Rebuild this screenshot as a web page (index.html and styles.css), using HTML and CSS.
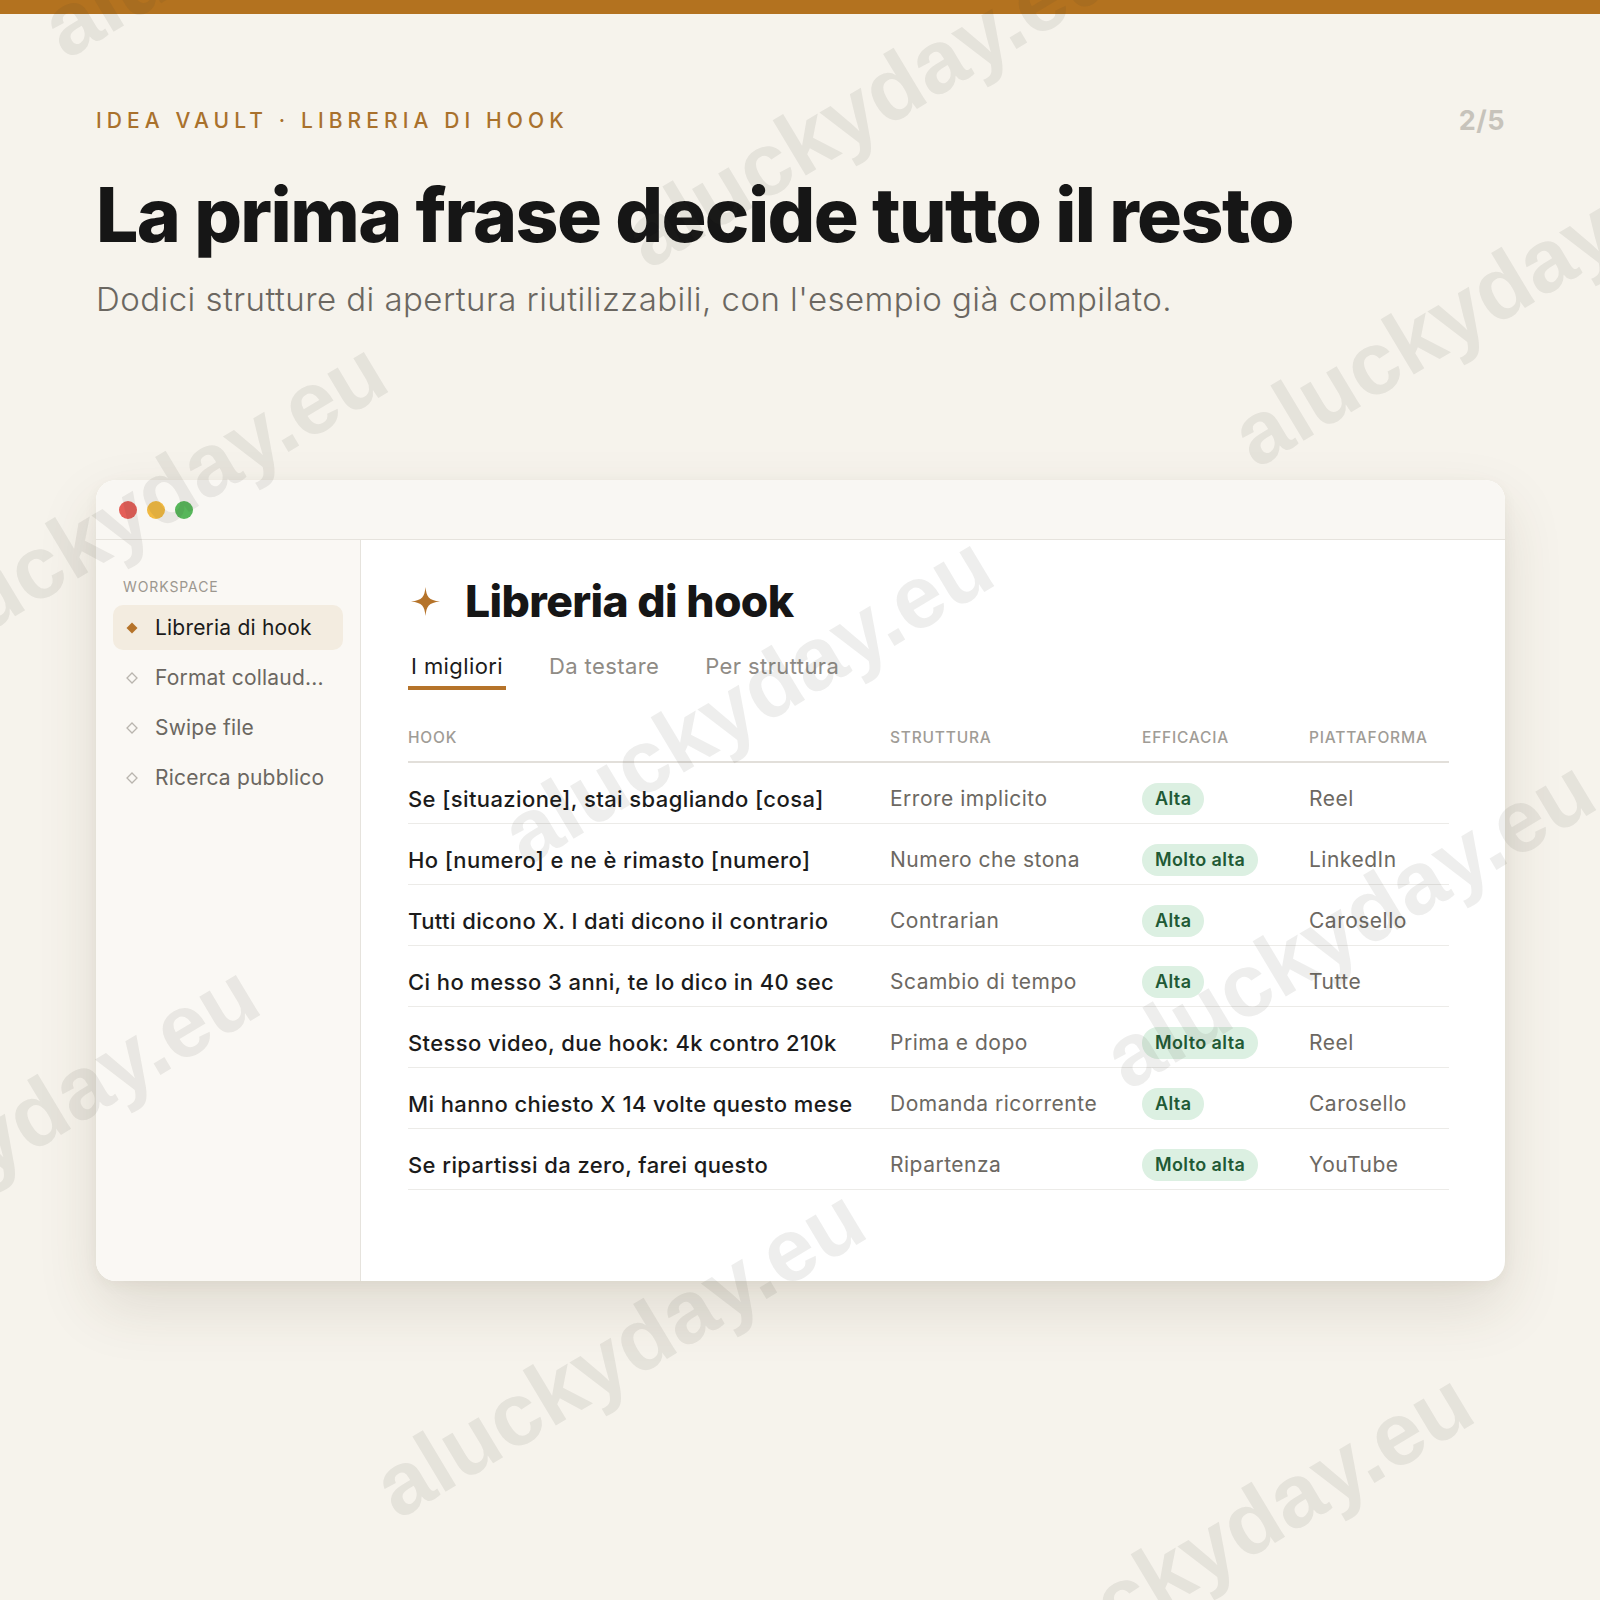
FILE: index.html
```html
<!DOCTYPE html>
<html lang="it">
<head>
<meta charset="utf-8">
<title>Idea Vault · Libreria di hook</title>
<link rel="stylesheet" href="styles.css">
</head>
<body>
<div class="canvas">
  <div class="topbar"></div>
  <div class="page">
    <div class="header-row">
      <div class="eyebrow">IDEA VAULT · LIBRERIA DI HOOK</div>
      <div class="pager">2/5</div>
    </div>
    <h1 class="title">La prima frase decide tutto il resto</h1>
    <p class="subtitle">Dodici strutture di apertura riutilizzabili, con l'esempio già compilato.</p>

    <div class="window">
      <div class="titlebar">
        <span class="dot red"></span>
        <span class="dot yellow"></span>
        <span class="dot green"></span>
      </div>
      <div class="body">
        <aside class="sidebar">
          <div class="side-label">WORKSPACE</div>
          <div class="side-item active">
            <svg class="dia" viewBox="0 0 12 12"><path d="M6 0.5 L11.5 6 L6 11.5 L0.5 6 Z" fill="#b5732a"/></svg>
            <span>Libreria di hook</span>
          </div>
          <div class="side-item">
            <svg class="dia" viewBox="0 0 12 12"><path d="M6 1 L11 6 L6 11 L1 6 Z" fill="none" stroke="#b9b5ae" stroke-width="1.3"/></svg>
            <span>Format collaud...</span>
          </div>
          <div class="side-item">
            <svg class="dia" viewBox="0 0 12 12"><path d="M6 1 L11 6 L6 11 L1 6 Z" fill="none" stroke="#b9b5ae" stroke-width="1.3"/></svg>
            <span>Swipe file</span>
          </div>
          <div class="side-item">
            <svg class="dia" viewBox="0 0 12 12"><path d="M6 1 L11 6 L6 11 L1 6 Z" fill="none" stroke="#b9b5ae" stroke-width="1.3"/></svg>
            <span>Ricerca pubblico</span>
          </div>
        </aside>
        <main class="main">
          <div class="main-head">
            <svg class="star" viewBox="0 0 24 24"><path d="M12 0 C12.8 8 14.5 11 24 12 C14.5 13 12.8 16 12 24 C11.2 16 9.5 13 0 12 C9.5 11 11.2 8 12 0 Z" fill="#b5732a"/></svg>
            <h2 class="main-title">Libreria di hook</h2>
          </div>
          <div class="tabs">
            <div class="tab active">I migliori</div>
            <div class="tab">Da testare</div>
            <div class="tab">Per struttura</div>
          </div>
          <table class="hooks">
            <colgroup>
              <col class="c-hook"><col class="c-str"><col class="c-eff"><col class="c-pl">
            </colgroup>
            <thead>
              <tr><th>HOOK</th><th>STRUTTURA</th><th>EFFICACIA</th><th>PIATTAFORMA</th></tr>
            </thead>
            <tbody>
              <tr><td class="hook">Se [situazione], stai sbagliando [cosa]</td><td class="str">Errore implicito</td><td><span class="badge">Alta</span></td><td class="pl">Reel</td></tr>
              <tr><td class="hook">Ho [numero] e ne è rimasto [numero]</td><td class="str">Numero che stona</td><td><span class="badge">Molto alta</span></td><td class="pl">LinkedIn</td></tr>
              <tr><td class="hook">Tutti dicono X. I dati dicono il contrario</td><td class="str">Contrarian</td><td><span class="badge">Alta</span></td><td class="pl">Carosello</td></tr>
              <tr><td class="hook">Ci ho messo 3 anni, te lo dico in 40 sec</td><td class="str">Scambio di tempo</td><td><span class="badge">Alta</span></td><td class="pl">Tutte</td></tr>
              <tr><td class="hook">Stesso video, due hook: 4k contro 210k</td><td class="str">Prima e dopo</td><td><span class="badge">Molto alta</span></td><td class="pl">Reel</td></tr>
              <tr><td class="hook">Mi hanno chiesto X 14 volte questo mese</td><td class="str">Domanda ricorrente</td><td><span class="badge">Alta</span></td><td class="pl">Carosello</td></tr>
              <tr><td class="hook">Se ripartissi da zero, farei questo</td><td class="str">Ripartenza</td><td><span class="badge">Molto alta</span></td><td class="pl">YouTube</td></tr>
            </tbody>
          </table>
        </main>
      </div>
    </div>
  </div>

  <div class="watermarks">
    <span class="wm wm1">aluckyday.eu</span>
    <span class="wm wm2">aluckyday.eu</span>
    <span class="wm wm3">aluckyday.eu</span>
    <span class="wm wm4">aluckyday.eu</span>
    <span class="wm wm5">aluckyday.eu</span>
    <span class="wm wm6">aluckyday.eu</span>
    <span class="wm wm7">aluckyday.eu</span>
    <span class="wm wm8">aluckyday.eu</span>
    <span class="wm wm9">aluckyday.eu</span>
  </div>
</div>
</body>
</html>
```

FILE: styles.css
```css
* { box-sizing: border-box; }

html, body {
  margin: 0;
  padding: 0;
}

body {
  background: #f6f3ec;
  font-family: Inter, "Noto Sans", "DejaVu Sans", sans-serif;
  color: #1b1b1b;
}

.canvas {
  position: relative;
  width: 1600px;
  height: 1600px;
  overflow: hidden;
  background: #f6f3ec;
}

.topbar {
  height: 14px;
  background: #b3721f;
}

.page {
  padding: 0 95px 0 96px;
}

.header-row {
  display: flex;
  justify-content: space-between;
  align-items: center;
  margin-top: 90px;
  height: 32px;
}

.eyebrow {
  font-size: 21px;
  font-weight: 500;
  letter-spacing: 5.1px;
  color: #a9712c;
}

.pager {
  font-size: 27px;
  font-weight: 700;
  color: #c7c3bb;
  letter-spacing: 0.5px;
}

.title {
  margin: 37px 0 0 0;
  font-size: 75px;
  line-height: 84px;
  font-weight: 800;
  letter-spacing: -1.6px;
  color: #161616;
}

.subtitle {
  margin: 22px 0 0 0;
  font-size: 33px;
  line-height: 40px;
  font-weight: 300;
  color: #6b6761;
  letter-spacing: 0.45px;
}

/* window */
.window {
  margin-top: 161px;
  width: 1409px;
  height: 801px;
  background: #ffffff;
  border-radius: 20px;
  overflow: hidden;
  box-shadow: 0 26px 60px rgba(80, 60, 30, 0.13), 0 4px 14px rgba(80, 60, 30, 0.05);
  display: flex;
  flex-direction: column;
}

.titlebar {
  height: 60px;
  flex: none;
  background: #f9f7f3;
  border-bottom: 1px solid #e6e3dd;
  display: flex;
  align-items: center;
  gap: 10px;
  padding: 0 0 0 23px;
}

.dot {
  width: 18px;
  height: 18px;
  border-radius: 50%;
  display: block;
}
.dot.red { background: #e45f58; }
.dot.yellow { background: #f1b941; }
.dot.green { background: #57b65a; }

.body {
  flex: 1;
  display: flex;
}

.sidebar {
  width: 265px;
  flex: none;
  background: #faf8f4;
  border-right: 1px solid #e6e3dd;
  padding: 36px 17px 0 17px;
}

.side-label {
  font-size: 14px;
  letter-spacing: 0.9px;
  color: #9c978f;
  padding-left: 10px;
  height: 22px;
  line-height: 22px;
  margin-bottom: 7px;
}

.side-item {
  height: 45px;
  display: flex;
  align-items: center;
  border-radius: 10px;
  padding-left: 13px;
  margin-bottom: 5px;
  font-size: 21px;
  letter-spacing: 0.2px;
  color: #6b6761;
}

.side-item .dia {
  width: 12px;
  height: 12px;
  margin-right: 17px;
  flex: none;
}

.side-item.active {
  background: #f3ece0;
  color: #1b1b1b;
}

.main {
  flex: 1;
  padding: 32px 56px 0 47px;
}

.main-head {
  display: flex;
  align-items: center;
  height: 58px;
}

.star {
  width: 29px;
  height: 29px;
  margin-left: 3px;
  margin-right: 25px;
}

.main-title {
  margin: 0;
  font-size: 44.5px;
  font-weight: 800;
  letter-spacing: -0.6px;
  color: #161616;
}

.tabs {
  display: flex;
  gap: 40px;
  margin-top: 18px;
  height: 42px;
}

.tab {
  font-size: 22px;
  letter-spacing: 0.4px;
  color: #8f8b85;
  padding: 0 3px;
  height: 42px;
  line-height: 36px;
}

.tab.active {
  color: #1b1b1b;
  border-bottom: 4px solid #b5732a;
}

.hooks {
  margin-top: 24px;
  width: 1041px;
  border-collapse: collapse;
  table-layout: fixed;
}

.c-hook { width: 482px; }
.c-str { width: 252px; }
.c-eff { width: 167px; }
.c-pl { width: 140px; }

.hooks th {
  text-align: left;
  font-size: 15.5px;
  font-weight: 500;
  color: #a09c96;
  letter-spacing: 0.8px;
  height: 48px;
  padding: 0;
  border-bottom: 2px solid #e2dfda;
}

.hooks td {
  height: 61px;
  padding: 12px 0 0 0;
  border-bottom: 1px solid #ecebe8;
  font-size: 21px;
  letter-spacing: 0.5px;
  white-space: nowrap;
}

.hooks td.hook {
  color: #1b1b1b;
  font-weight: 500;
  font-size: 22px;
  letter-spacing: 0.4px;
}

.hooks td.str,
.hooks td.pl {
  color: #6c6862;
}

.badge {
  display: inline-block;
  background: #dcf0e2;
  color: #1f5a35;
  font-size: 18px;
  font-weight: 600;
  letter-spacing: 0.4px;
  border-radius: 17px;
  padding: 0 13px;
  height: 32px;
  line-height: 32px;
}

/* watermark overlay */
.watermarks {
  position: absolute;
  inset: 0;
  pointer-events: none;
}

.wm {
  position: absolute;
  font-family: "Liberation Sans", Arial, sans-serif;
  font-weight: 700;
  font-size: 89px;
  line-height: 1;
  color: rgba(60, 55, 50, 0.085);
  white-space: nowrap;
  transform: translate(-50%, -50%) rotate(-31deg);
}

.wm1 { left: 869px; top: 102px; }
.wm2 { left: 1477px; top: 301px; }
.wm3 { left: 141px; top: 505px; }
.wm4 { left: 747px; top: 699px; }
.wm5 { left: 1349px; top: 923px; }
.wm6 { left: 13px; top: 1128px; }
.wm7 { left: 619px; top: 1352px; }
.wm8 { left: 1227px; top: 1536px; }
.wm9 { left: 287px; top: -108px; }
```
